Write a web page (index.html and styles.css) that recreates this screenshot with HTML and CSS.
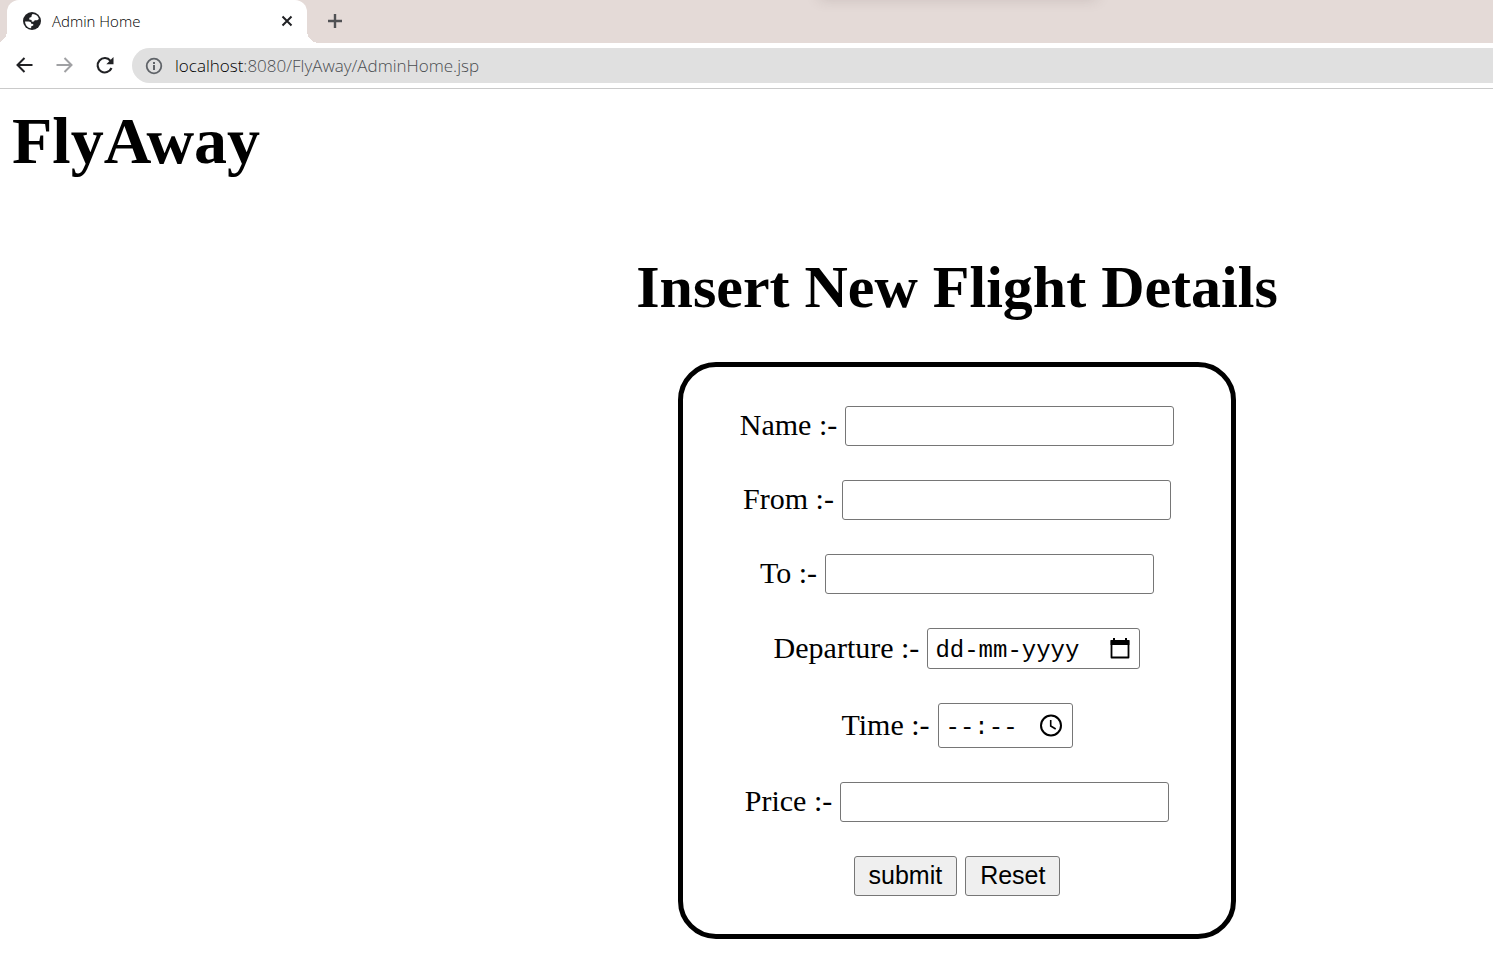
FILE: index.html
```html
<!DOCTYPE html>
<html lang="en">
<head>
<meta charset="utf-8">
<title>Admin Home</title>
<link rel="stylesheet" href="styles.css">
</head>
<body>
<header class="browser">
  <div class="tabs">
    <div class="tab">
      <svg class="globe" viewBox="0 0 22 22" width="22" height="22" aria-hidden="true"><circle cx="11" cy="11" r="9" fill="#202124"/><path fill="#fff" d="M11.500 4c2 0 4.200.9 5.500 2.800l.9 2.200-1.700 1.300-2.500-.1-.7 1.300-2.200.2-.3-1.700-2.300-.6.200-1.700 2-.7.300-1.700zM4 11.500l3.600.1c1.700 0 2.500.9 2.700 2.200l1.900.2.100 1.500-2 .8-.2 2C6.800 18 4.200 15.300 4 11.500z"/></svg>
      <span class="tab-title">Admin Home</span>
      <button class="icon-button close" aria-label="Close tab"><svg viewBox="0 0 12 12" width="12" height="12"><path d="M1.500 1.500l9 9M10.500 1.500l-9 9" stroke="#202124" stroke-width="2" fill="none"/></svg></button>
    </div>
    <button class="icon-button new-tab" aria-label="New tab"><svg viewBox="0 0 16 16" width="16" height="16"><path d="M8 1v14M1 8h14" stroke="#505154" stroke-width="2.400" fill="none"/></svg></button>
    <div class="window-shadow"></div>
  </div>
  <div class="toolbar">
    <nav class="nav-buttons">
      <button class="icon-button" aria-label="Back"><svg viewBox="0 0 20 20" width="20" height="20"><path d="M17.500 9H2.500M9.500 2l-7 7 7 7" stroke="#202124" stroke-width="2" fill="none"/></svg></button>
      <button class="icon-button" aria-label="Forward"><svg viewBox="0 0 20 20" width="20" height="20"><path d="M1.500 9h15M9.500 2l7 7-7 7" stroke="#a0a1a4" stroke-width="2" fill="none"/></svg></button>
      <button class="icon-button" aria-label="Reload"><svg viewBox="0 0 20 20" width="20" height="20"><path d="M16.500 12A7.200 7.200 0 1 1 15.500 4.800" stroke="#202124" stroke-width="2.100" fill="none"/><path d="M18.500 1v7.200h-7.200z" fill="#202124"/></svg></button>
    </nav>
    <div class="address">
      <svg viewBox="0 0 18 18" width="18" height="18" aria-hidden="true"><circle cx="9" cy="9" r="7.300" stroke="#5f6368" stroke-width="1.800" fill="none"/><path d="M9 8v5M9 5v2" stroke="#5f6368" stroke-width="2"/></svg>
      <span class="url"><span class="host">localhost</span>:8080/FlyAway/AdminHome.jsp</span>
    </div>
  </div>
</header>
<main class="page">
  <h1 class="brand">FlyAway</h1>
  <section class="content">
    <h2 class="heading">Insert New Flight Details</h2>
    <form class="card">
      <div class="row"><label for="name">Name :-</label><input class="field" id="name" type="text"></div>
      <div class="row"><label for="from">From :-</label><input class="field" id="from" type="text"></div>
      <div class="row"><label for="to">To :-</label><input class="field" id="to" type="text"></div>
      <div class="row"><label for="departure">Departure :-</label>
        <div class="picker date"><input class="picker-input" id="departure" type="text" placeholder="dd-mm-yyyy">
          <svg viewBox="0 0 20 22" width="20" height="22" aria-hidden="true"><path d="M1.500 3h17v16.500h-17z" fill="none" stroke="#000" stroke-width="1.800" stroke-linejoin="round"/><path d="M.6 2h18.800v5H.6zM3 0h2v3H3zM15 0h2v3h-2z"/></svg></div>
      </div>
      <div class="row"><label for="time">Time :-</label>
        <div class="picker time"><input class="picker-input" id="time" type="text" placeholder="--:--">
          <svg viewBox="0 0 24 24" width="24" height="24" aria-hidden="true"><circle cx="12" cy="11.500" r="10" fill="none" stroke="#000" stroke-width="2"/><path d="M11.700 6v6l5 3" fill="none" stroke="#000" stroke-width="1.600"/></svg></div>
      </div>
      <div class="row"><label for="price">Price :-</label><input class="field" id="price" type="text"></div>
      <div class="row"><button class="button" type="submit">submit</button><button class="button" type="reset">Reset</button></div>
    </form>
  </section>
</main>
</body>
</html>
```
FILE: styles.css
```css
* { box-sizing: border-box; }
body {
  margin: 0;
  background: #fff;
  color: #000;
  font-family: "Liberation Serif", "Times New Roman", serif;
}
.browser {
  border-bottom: 1px solid #cacaca;
  font-family: "Open Sans", "Noto Sans", sans-serif;
}
.icon-button {
  display: flex;
  padding: 0;
  border: 0;
  background: none;
}
.tabs {
  position: relative;
  display: flex;
  align-items: center;
  height: 43px;
  padding: 0 0 2px 7px;
  background: #e4dad7;
  overflow: hidden;
}
.tab {
  position: relative;
  display: flex;
  align-items: center;
  align-self: flex-start;
  width: 300px;
  height: 43px;
  padding: 0 14px 2px;
  border-radius: 12px 12px 0 0;
  background: #fff;
}
.tab::before,
.tab::after {
  content: "";
  position: absolute;
  bottom: 0;
  width: 12px;
  height: 12px;
}
.tab::before {
  right: 100%;
  background: radial-gradient(circle at 0 0, transparent 12px, #fff 12px);
}
.tab::after {
  left: 100%;
  background: radial-gradient(circle at 100% 0, transparent 12px, #fff 12px);
}
.tab-title {
  flex: 1;
  margin-left: 9px;
  color: #000;
  font-size: 15px;
  font-weight: 300;
  line-height: 20px;
}
.new-tab { margin-left: 20px; }
.window-shadow {
  position: absolute;
  top: -10px;
  left: 820px;
  width: 276px;
  height: 8px;
  box-shadow: 0 0 14px rgba(80, 60, 60, 0.25);
}
.toolbar {
  display: flex;
  align-items: center;
  gap: 17px;
  height: 45px;
  padding-left: 15px;
}
.nav-buttons { display: flex; gap: 20px; }
.address {
  display: flex;
  flex: 1;
  align-items: center;
  gap: 12px;
  height: 35px;
  padding-left: 13px;
  border-radius: 18px 0 0 18px;
  background: #e0e0e0;
}
.url {
  padding-bottom: 1px;
  color: #4a4d51;
  font-size: 17px;
  font-weight: 300;
}
.host { color: #000; }
.page { padding: 14px 0 36px; }
.brand {
  margin: 0 0 74px 12px;
  font-size: 66px;
  line-height: 76px;
}
.content {
  display: flex;
  flex-direction: column;
  align-items: center;
  gap: 40px;
  padding-left: 421px;
}
.heading {
  margin: 0;
  font-size: 60px;
  line-height: 69px;
}
.card {
  display: flex;
  flex-direction: column;
  gap: 34px;
  padding: 39px 57px 38px;
  border: 5px solid #000;
  border-radius: 38px;
}
.row {
  display: flex;
  align-items: center;
  justify-content: center;
  gap: 8px;
  font-size: 30px;
  line-height: 34px;
}
.row label { padding-bottom: 2px; }
.field,
.picker {
  height: 40px;
  border: 1px solid #767676;
  border-radius: 3px;
  background: #fff;
}
.field {
  width: 329px;
  padding: 2px 4px;
  font: 25px "Liberation Sans", Arial, sans-serif;
}
.picker {
  display: flex;
  align-items: center;
  justify-content: space-between;
  padding: 0 9px 0 7px;
}
.date { width: 213px; height: 41px; }
.time { width: 135px; height: 45px; }
.picker-input {
  flex: 1;
  min-width: 0;
  padding: 3px 0 0;
  border: 0;
  background: none;
  font: 24px "Liberation Mono", monospace;
}
.picker-input::placeholder { color: #000; }
.button {
  height: 40px;
  padding: 0 14px 1px;
  border: 1px solid #767676;
  border-radius: 3px;
  background: #efefef;
  color: #000;
  font: 25px "Liberation Sans", Arial, sans-serif;
}
```
